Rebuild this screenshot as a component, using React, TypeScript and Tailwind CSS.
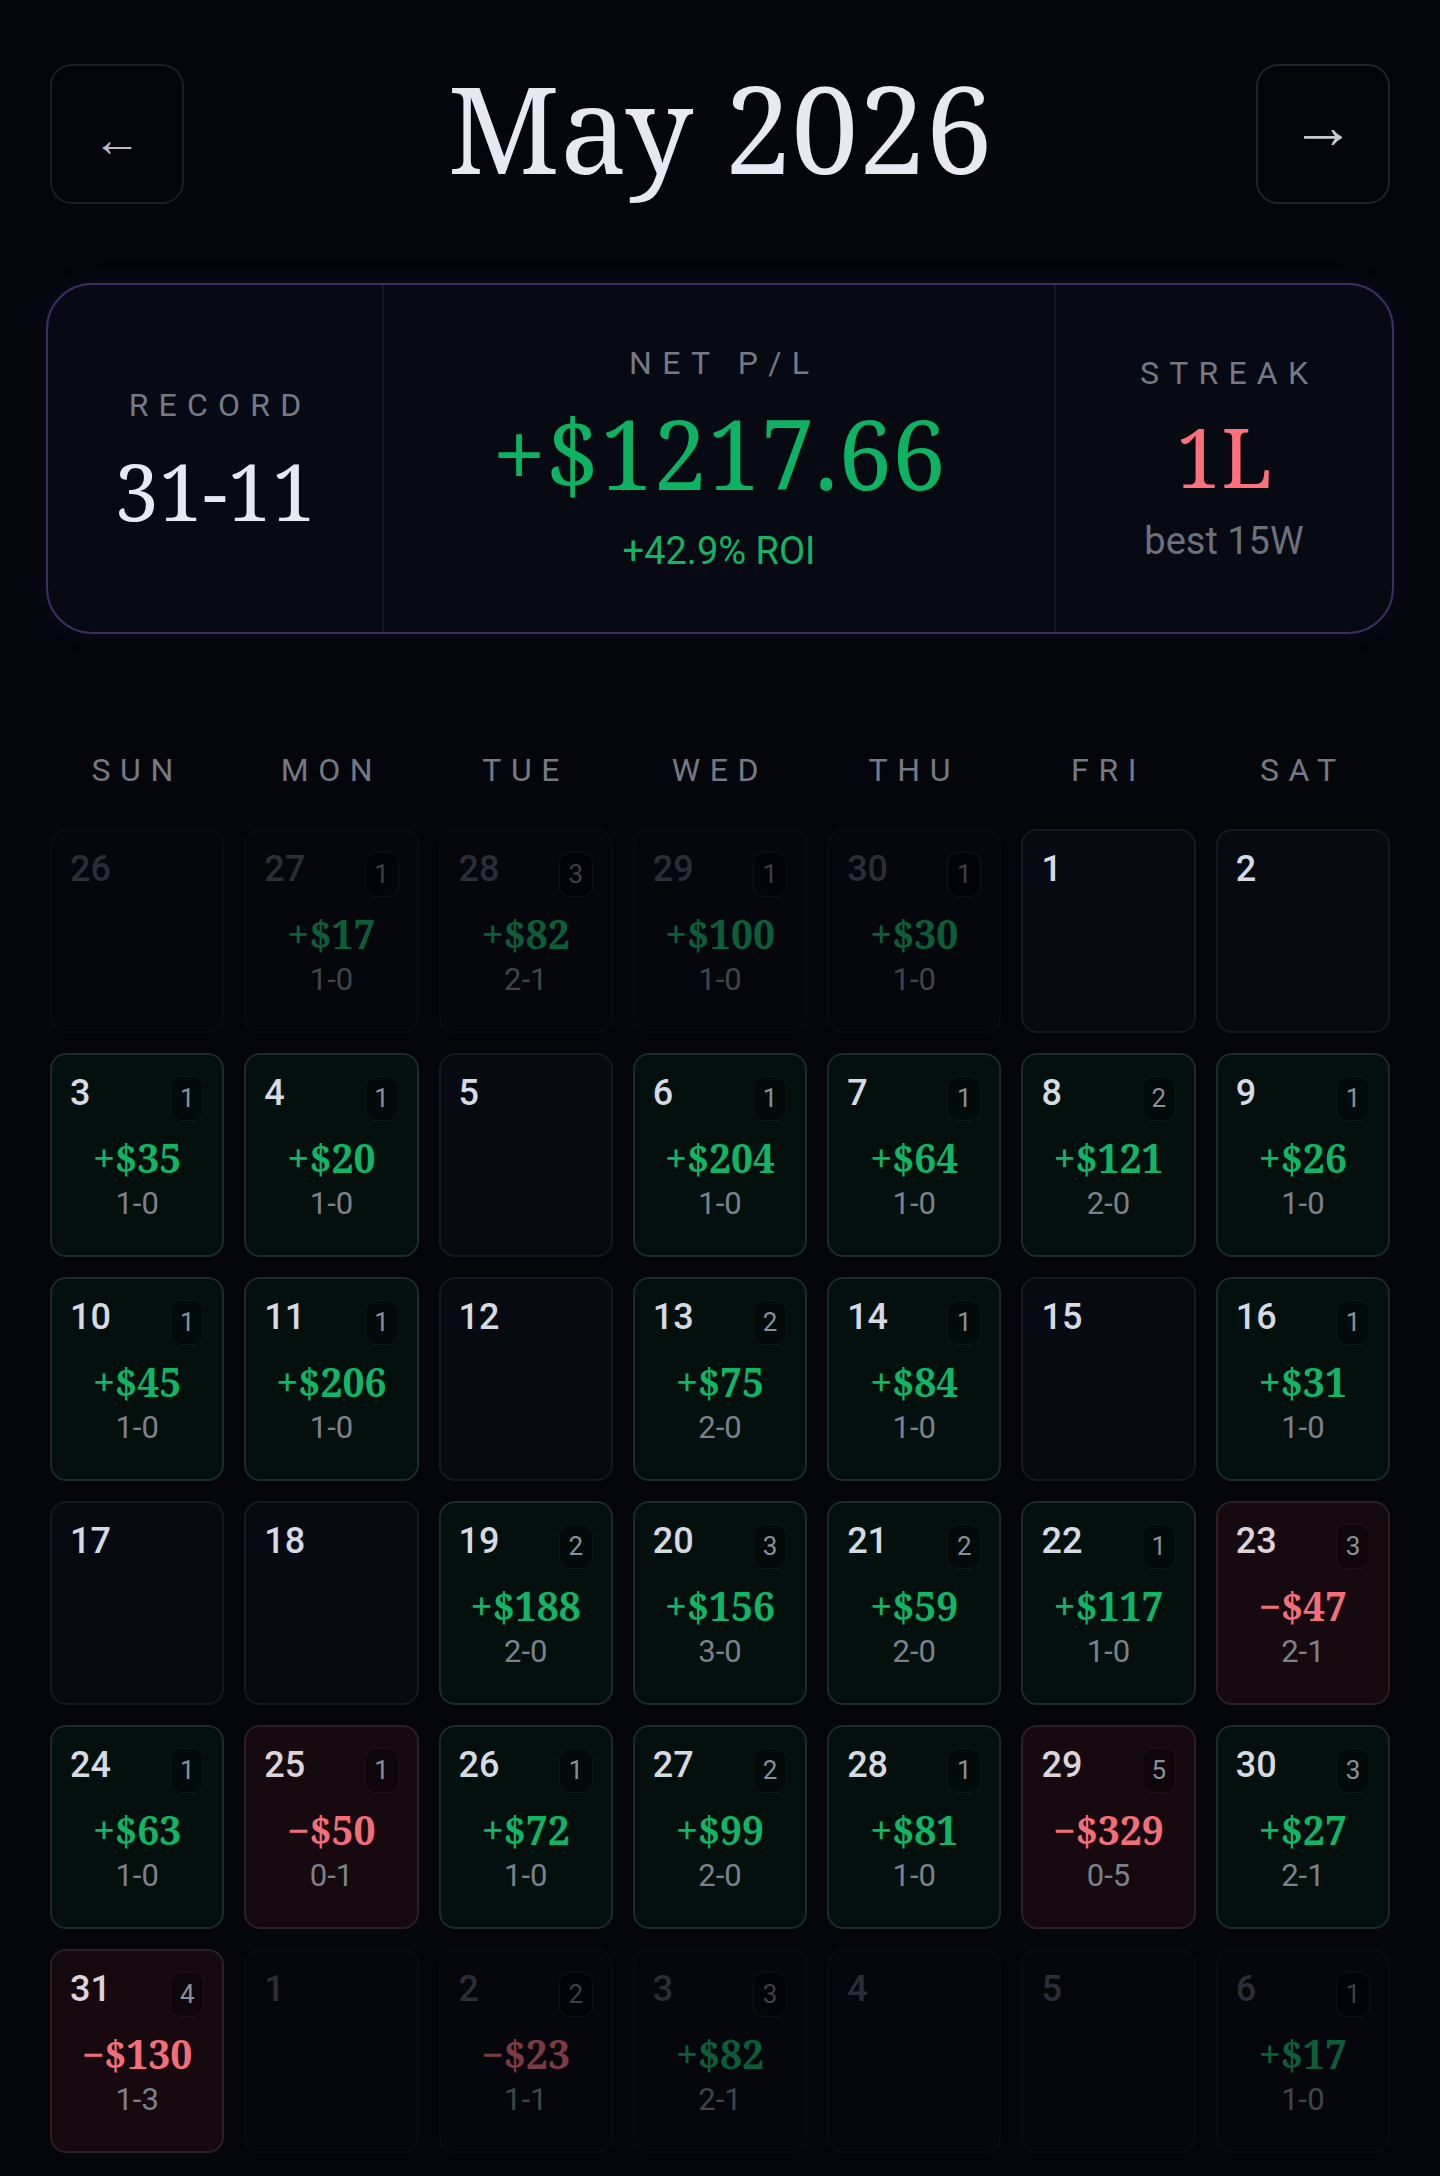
import React from 'react';

type Day = { d: number; out?: boolean; pl?: number; rec?: string; n?: number };

const weekdays = ['SUN', 'MON', 'TUE', 'WED', 'THU', 'FRI', 'SAT'];

const days: Day[] = [
  { d: 26, out: true },
  { d: 27, out: true, pl: 17, rec: '1-0', n: 1 },
  { d: 28, out: true, pl: 82, rec: '2-1', n: 3 },
  { d: 29, out: true, pl: 100, rec: '1-0', n: 1 },
  { d: 30, out: true, pl: 30, rec: '1-0', n: 1 },
  { d: 1 },
  { d: 2 },
  { d: 3, pl: 35, rec: '1-0', n: 1 },
  { d: 4, pl: 20, rec: '1-0', n: 1 },
  { d: 5 },
  { d: 6, pl: 204, rec: '1-0', n: 1 },
  { d: 7, pl: 64, rec: '1-0', n: 1 },
  { d: 8, pl: 121, rec: '2-0', n: 2 },
  { d: 9, pl: 26, rec: '1-0', n: 1 },
  { d: 10, pl: 45, rec: '1-0', n: 1 },
  { d: 11, pl: 206, rec: '1-0', n: 1 },
  { d: 12 },
  { d: 13, pl: 75, rec: '2-0', n: 2 },
  { d: 14, pl: 84, rec: '1-0', n: 1 },
  { d: 15 },
  { d: 16, pl: 31, rec: '1-0', n: 1 },
  { d: 17 },
  { d: 18 },
  { d: 19, pl: 188, rec: '2-0', n: 2 },
  { d: 20, pl: 156, rec: '3-0', n: 3 },
  { d: 21, pl: 59, rec: '2-0', n: 2 },
  { d: 22, pl: 117, rec: '1-0', n: 1 },
  { d: 23, pl: -47, rec: '2-1', n: 3 },
  { d: 24, pl: 63, rec: '1-0', n: 1 },
  { d: 25, pl: -50, rec: '0-1', n: 1 },
  { d: 26, pl: 72, rec: '1-0', n: 1 },
  { d: 27, pl: 99, rec: '2-0', n: 2 },
  { d: 28, pl: 81, rec: '1-0', n: 1 },
  { d: 29, pl: -329, rec: '0-5', n: 5 },
  { d: 30, pl: 27, rec: '2-1', n: 3 },
  { d: 31, pl: -130, rec: '1-3', n: 4 },
  { d: 1, out: true },
  { d: 2, out: true, pl: -23, rec: '1-1', n: 2 },
  { d: 3, out: true, pl: 82, rec: '2-1', n: 3 },
  { d: 4, out: true },
  { d: 5, out: true },
  { d: 6, out: true, pl: 17, rec: '1-0', n: 1 }
];

const serif = "font-['Noto_Serif','DejaVu_Serif',serif]";

function money(pl: number) {
  return pl > 0 ? `+$${pl}` : `\u2212$${Math.abs(pl)}`;
}

function Cell({ day }: { day: Day }) {
  const has = day.pl !== undefined;
  const win = has && day.pl! > 0;
  const loss = has && day.pl! < 0;
  const tone = day.out
    ? 'border-[#090c13] bg-[#05070d]'
    : win
      ? 'border-[#1c2a2c] bg-[#03100e]'
      : loss
        ? 'border-[#2c1e27] bg-[#160a10]'
        : 'border-[#151923] bg-[#080a12]';

  return (
    <div className={`h-[204px] rounded-[16px] border-2 px-[18px] pt-[20px] ${tone}`}>
      <div className="flex h-[46px] items-start justify-between">
        <span
          className={`text-[36px] leading-none font-medium ${
            day.out ? 'text-[#2a2e38]' : loss ? 'text-[#ddd3da]' : 'text-[#d5dae3]'
          }`}
        >
          {day.d}
        </span>
        {day.n && (
          <span
            className={`mt-[1px] flex h-[45px] w-[34px] items-center justify-center rounded-[10px] border border-white/5 bg-black/30 text-[26px] ${
              day.out ? 'text-[#3d4049]' : 'text-[#8a909b]'
            }`}
          >
            {day.n}
          </span>
        )}
      </div>
      {has && (
        <div className={`mt-[14px] flex flex-col items-center ${day.out ? 'opacity-50' : ''}`}>
          <span
            className={`${serif} text-[39px] leading-[46px] font-bold ${win ? 'text-[#12b466]' : 'text-[#f36e79]'}`}
          >
            {money(day.pl!)}
          </span>
          <span className="mt-[5px] text-[31px] leading-[36px] text-[#7b818c]">{day.rec}</span>
        </div>
      )}
    </div>
  );
}

export default function App() {
  return (
    <div className="min-h-screen bg-[#04060c] px-[46px] pt-[64px] pb-[22px] font-['Roboto','Noto_Sans',sans-serif] text-[#d5dae3]">
      <header className="flex items-center justify-between px-[4px]">
        <button
          type="button"
          className="flex h-[140px] w-[134px] items-center justify-center rounded-[22px] border-2 border-[#1a1e27] pt-[12px] text-[48px] text-[#b8bcc6]"
        >
          ←
        </button>
        <h1 className={`${serif} pb-[12px] text-[120px] leading-none text-[#e6e9f2]`}>May 2026</h1>
        <button
          type="button"
          className="flex h-[140px] w-[134px] items-center justify-center rounded-[22px] border-2 border-[#20242e] pb-[14px] text-[64px] text-[#c4c8d1]"
        >
          →
        </button>
      </header>

      <section className="mt-[79px] grid h-[351px] grid-cols-[1fr_2fr_1fr] rounded-[46px] border-2 border-[#3d2d60] bg-[#070a12] shadow-[0_0_24px_rgba(88,60,140,0.12)]">
        <div className="flex flex-col items-center justify-center border-r-2 border-[#141821]">
          <span className="pl-[0.32em] text-[32px] leading-[36px] tracking-[0.32em] text-[#747985]">RECORD</span>
          <span className={`${serif} mt-[28px] text-[79px] leading-none text-[#e6e9f2]`}>31-11</span>
        </div>
        <div className="flex flex-col items-center justify-center border-r-2 border-[#141821]">
          <span className="pl-[0.32em] text-[32px] leading-[36px] tracking-[0.32em] text-[#747985]">NET P/L</span>
          <span className={`${serif} mt-[24px] text-[96px] leading-none text-[#0db262]`}>+$1217.66</span>
          <span className="mt-[28px] text-[38px] leading-[44px] text-[#12b466]">+42.9% ROI</span>
        </div>
        <div className="flex flex-col items-center justify-center">
          <span className="pl-[0.32em] text-[32px] leading-[36px] tracking-[0.32em] text-[#747985]">STREAK</span>
          <span className={`${serif} mt-[24px] text-[82px] leading-none text-[#ff6f7c]`}>1L</span>
          <span className="mt-[22px] text-[38px] leading-[44px] text-[#6b707c]">best 15W</span>
        </div>
      </section>

      <div className="mt-[118px] grid grid-cols-7 gap-[20px] px-[4px]">
        {weekdays.map(w => (
          <div key={w} className="text-center text-[32px] leading-[36px] tracking-[0.3em] text-[#747985]">
            {w}
          </div>
        ))}
      </div>

      <div className="mt-[41px] grid grid-cols-7 gap-[20px] px-[4px]">
        {days.map((day, i) => (
          <Cell key={i} day={day} />
        ))}
      </div>
    </div>
  );
}
